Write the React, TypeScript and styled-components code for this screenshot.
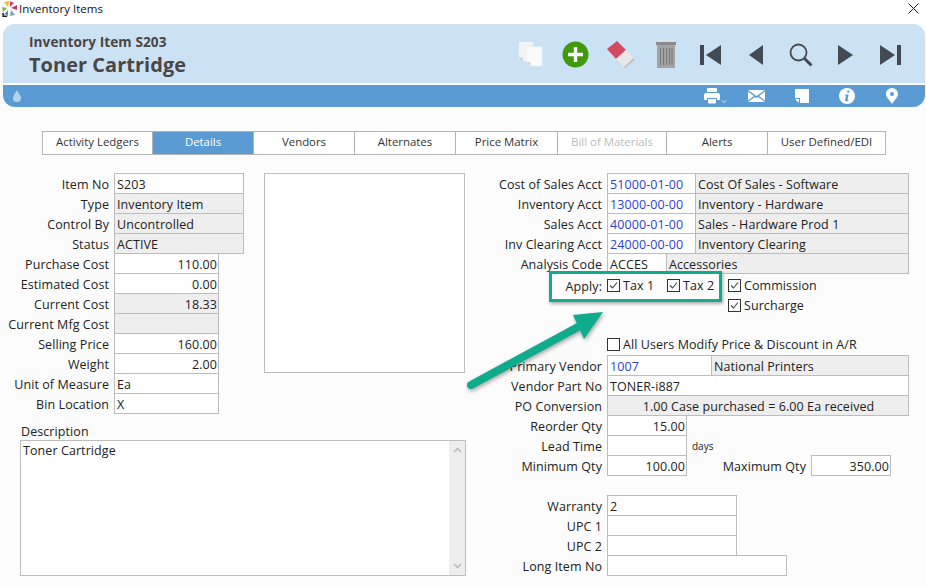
import React from "react";
import styled, { createGlobalStyle } from "styled-components";

const Global = createGlobalStyle`
  html, body { margin: 0; padding: 0; background: #fcfcfc; }
  body { font-family: "Open Sans", "Noto Sans", sans-serif; font-size: 12.5px; letter-spacing: 0.08px; color: #222; }
`;

const Page = styled.div`
  position: relative;
  width: 926px;
  height: 587px;
  overflow: hidden;
  background: #fcfcfc;
`;
const TitleBar = styled.div`
  height: 24px;
  background: #fff;
  display: flex;
  align-items: flex-start;
  justify-content: space-between;
  padding: 0 7px 0 2px;
  box-sizing: border-box;
`;
const TitleLeft = styled.div`
  display: flex;
  align-items: center;
  gap: 2px;
  height: 17px;
  font-size: 11.5px;
  letter-spacing: 0;
  color: #111;
`;
const Head = styled.div`
  margin: 0 1px 0 3px;
`;
const HeadTop = styled.div`
  height: 59px;
  background: #cbe1f4;
  border-radius: 12px 12px 0 0;
  display: flex;
  align-items: center;
  justify-content: space-between;
  padding: 0 12px 0 26px;
  box-sizing: border-box;
`;
const HeadTitles = styled.div`
  color: #4a4646;
  font-weight: 700;
  padding-top: 4px;
`;
const HeadSmall = styled.div`
  font-size: 13.6px;
  line-height: 18px;
  margin-top: 1px;
`;
const HeadBig = styled.div`
  font-size: 19.9px;
  line-height: 28px;
  font-weight: 700;
`;
const IconRow = styled.div<{ $top?: number }>`
  display: flex;
  align-items: center;
  padding-top: ${(p) => p.$top ?? 0}px;
`;
const Slot = styled.div`
  width: 45px;
  display: flex;
  align-items: center;
  justify-content: center;
`;
const HeadBar = styled.div`
  margin-top: 2px;
  height: 22px;
  background: #5b9bd3;
  border-radius: 0 0 12px 12px;
  display: flex;
  align-items: center;
  justify-content: space-between;
  padding: 0 11px 0 10px;
  box-sizing: border-box;
`;
const Tabs = styled.div`
  display: flex;
  margin: 24px 0 0 42px;
  height: 24px;
`;
const Tab = styled.div<{ $w: number; $on?: boolean; $off?: boolean }>`
  width: ${(p) => p.$w}px;
  box-sizing: border-box;
  margin-left: -1px;
  &:first-child { margin-left: 0; }
  border: 1px solid #b4b4b4;
  display: flex;
  align-items: center;
  justify-content: center;
  padding-bottom: 3px;
  font-size: 11.4px;
  letter-spacing: 0;
  background: ${(p) => (p.$on ? "#5b9bd3" : "#fff")};
  color: ${(p) => (p.$on ? "#fff" : p.$off ? "#bbb" : "#333")};
`;
const Form = styled.div`
  display: grid;
  grid-template-columns: 264px 202px 1fr;
  grid-template-rows: 251px auto;
  margin-top: 18px;
`;
const LeftCol = styled.div`
  grid-column: 1;
  grid-row: 1;
`;
const PhotoBox = styled.div`
  grid-column: 2;
  grid-row: 1;
  width: 201px;
  height: 200px;
  box-sizing: border-box;
  border: 1px solid #bdbdbd;
  background: #fff;
`;
const RightCol = styled.div`
  grid-column: 3;
  grid-row: 1 / span 2;
`;
const DescBlock = styled.div`
  grid-column: 1 / span 2;
  grid-row: 2;
  padding-left: 20px;
`;
const DescLabel = styled.div`
  height: 16px;
  line-height: 15px;
  padding-left: 1px;
`;
const DescBox = styled.div`
  width: 446px;
  height: 136px;
  box-sizing: border-box;
  border: 1px solid #bdbdbd;
  background: #fff;
  display: flex;
  justify-content: space-between;
`;
const DescText = styled.div`
  padding: 2px 2px;
  line-height: 16px;
`;
const Scroll = styled.div`
  width: 16px;
  background: #eee;
  display: flex;
  flex-direction: column;
  justify-content: space-between;
  align-items: center;
  padding: 6px 0;
  box-sizing: border-box;
`;
const Row = styled.div`
  display: flex;
  height: 20px;
`;
const Label = styled.div<{ $w: number }>`
  width: ${(p) => p.$w}px;
  flex: none;
  text-align: right;
  padding-right: 5px;
  box-sizing: border-box;
  line-height: 23px;
  white-space: nowrap;
  color: #222;
`;
const Field = styled.div<{ $w: number; $ro?: boolean; $right?: boolean; $link?: boolean; $center?: boolean }>`
  width: ${(p) => p.$w}px;
  height: 21px;
  flex: none;
  box-sizing: border-box;
  border: 1px solid #bdbdbd;
  margin-right: -1px;
  padding: 0 1px 0 2px;
  line-height: 21px;
  white-space: nowrap;
  overflow: hidden;
  background: ${(p) => (p.$ro ? "#eee" : "#fff")};
  text-align: ${(p) => (p.$right ? "right" : p.$center ? "center" : "left")};
  color: ${(p) => (p.$link ? "#2b3fd6" : "#222")};
`;
const Days = styled.div`
  font-size: 10px;
  letter-spacing: 0;
  line-height: 22px;
  margin-left: 6px;
`;
const ApplyRow = styled.div`
  display: flex;
  height: 20px;
  margin-top: 2px;
`;
const CheckItem = styled.div<{ $w: number }>`
  width: ${(p) => p.$w}px;
  display: flex;
  align-items: center;
  gap: 3px;
  white-space: nowrap;
`;
const Box = styled.div`
  width: 13px;
  height: 13px;
  flex: none;
  box-sizing: border-box;
  border: 1px solid #333;
  background: #fff;
  display: flex;
  align-items: center;
  justify-content: center;
`;
const Spacer = styled.div<{ $h: number }>`
  height: ${(p) => p.$h}px;
`;
const Highlight = styled.div`
  position: absolute;
  left: 549px;
  top: 271px;
  width: 173px;
  height: 31px;
  box-sizing: border-box;
  border: 3px solid #12ab8f;
  box-shadow: 1px 2px 3px rgba(0, 0, 0, 0.3);
`;
const ArrowSvg = styled.svg`
  position: absolute;
  left: 460px;
  top: 300px;
  filter: drop-shadow(1px 2px 2px rgba(0, 0, 0, 0.35));
`;
const CloseSvg = styled.svg`
  margin-top: 3px;
`;

const Check = ({ on = true }: { on?: boolean }) => (
  <Box>
    {on && (
      <svg width="11" height="11" viewBox="0 0 11 11">
        <path d="M2 5.5 L4.5 8 L9 2.5" fill="none" stroke="#444" strokeWidth="1.1" />
      </svg>
    )}
  </Box>
);

const Logo = () => (
  <svg width="15" height="16" viewBox="0 0 15 16">
    <path d="M6 6 L2 1 L7 0 Z" fill="#f5c21b" />
    <path d="M8 6 L8 0 L12 2 Z" fill="#d93a7d" />
    <path d="M9 7 L15 4 L15 9 Z" fill="#c9326f" />
    <path d="M9 9 L13 14 L8 15 Z" fill="#7f9fc2" />
    <path d="M6 9 L6 15 L3 13 Z" fill="#3f93c9" />
    <path d="M5 7 L0 6 L1 11 Z" fill="#7cb93e" />
    <path d="M0.5 16 V12 H1.8 V14.7 H5 V16 Z M2 14 L5 11" fill="#222" stroke="#222" strokeWidth=".3" />
  </svg>
);
const Close = () => (
  <CloseSvg width="11" height="11" viewBox="0 0 11 11">
    <path d="M0.5 0.5 L10.5 10.5 M10.5 0.5 L0.5 10.5" stroke="#222" strokeWidth="1" />
  </CloseSvg>
);
const CopyIcon = () => (
  <svg width="25" height="25" viewBox="0 0 26 26">
    <path d="M1 0 H16 V20 H5 L1 16 Z" fill="#f3f3f3" />
    <path d="M9 5 H25 V25 H13 L9 21 Z" fill="#fafafa" stroke="#e6eef5" strokeWidth=".5" />
    <path d="M9 21 H13 V25 Z" fill="#cfcfcf" />
    <path d="M1 16 H5 V20 Z" fill="#cfcfcf" />
  </svg>
);
const PlusIcon = () => (
  <svg width="27" height="27" viewBox="0 0 27 27">
    <circle cx="13.5" cy="13.5" r="13" fill="#3f9a0e" />
    <path d="M13.5 6 V21 M6 13.5 H21" stroke="#fff" strokeWidth="3.4" />
  </svg>
);
const EraserIcon = () => (
  <svg width="28" height="27" viewBox="0 0 28 27">
    <path d="M0 8 L10 0 L19 9 L9 18 Z" fill="#d24a62" />
    <path d="M9 18 L19 9 L27 17 L17 26 Z" fill="#e8e8e8" />
    <path d="M17 26 L27 17 L27.5 19 L18 27 Z" fill="#bdbdbd" />
  </svg>
);
const TrashIcon = () => (
  <svg width="20" height="26" viewBox="0 0 20 26">
    <path d="M0 0 H20 V3 H0 Z" fill="#8a8a8a" />
    <path d="M1 3 H19 V26 H1 Z" fill="#a3a3a3" />
    <path d="M4.5 6 V23 M7.5 6 V23 M10.5 6 V23 M13.5 6 V23 M16 6 V23" stroke="#777" strokeWidth="1" />
  </svg>
);
const Nav = ({ d, w }: { d: string; w: number }) => (
  <svg width={w} height="20" viewBox={`0 0 ${w} 20`}>
    <path d={d} fill="#434a54" />
  </svg>
);
const SearchIcon = () => (
  <svg width="24" height="24" viewBox="0 0 24 24">
    <circle cx="9.5" cy="9.5" r="8" fill="none" stroke="#434a54" strokeWidth="1.8" />
    <path d="M15.5 15.5 L22.5 22.5" stroke="#434a54" strokeWidth="3" />
  </svg>
);
const Drop = () => (
  <svg width="8" height="12" viewBox="0 0 8 12">
    <path d="M4 0 C5 3 8 5 8 8 A4 4 0 0 1 0 8 C0 5 3 3 4 0 Z" fill="#b5d2ec" />
  </svg>
);
const PrintIcon = () => (
  <svg width="30" height="16" viewBox="-7 0 30 16">
    <path d="M3 0 H12 A1 1 0 0 1 13 1 V4 H3 Z M2 5 H14 A2 2 0 0 1 16 7 V12 H13 V10 H3 V12 H0 V7 A2 2 0 0 1 2 5 Z M4 11 H12 V14.5 A1 1 0 0 1 11 15.5 H5 A1 1 0 0 1 4 14.5 Z" fill="#fff" />
    <path d="M18 12.5 L20 14.5 L22 12.5" fill="none" stroke="#fff" strokeWidth=".8" />
  </svg>
);
const MailIcon = () => (
  <svg width="17" height="12" viewBox="0 0 17 12">
    <path d="M0 0 H17 L8.5 6 Z M0 1.5 L6 6 L0 10.5 Z M17 1.5 L11 6 L17 10.5 Z M0 12 L7 7 L8.5 8 L10 7 L17 12 Z" fill="#fff" />
  </svg>
);
const NoteIcon = () => (
  <svg width="14" height="14" viewBox="0 0 14 14">
    <path d="M0 0 H14 V14 H5 V9 H0 Z" fill="#fff" />
    <path d="M0 10 H4 V14 Z" fill="#fff" />
  </svg>
);
const InfoIcon = () => (
  <svg width="16" height="16" viewBox="0 0 16 16">
    <circle cx="8" cy="8" r="8" fill="#fff" />
    <path d="M8.3 2.6 h2 v2 h-2 Z M6.2 6.4 h3.4 L8.4 11.8 h1 l-.2 1.1 H5.9 L7 7.5 H6 Z" fill="#5b9bd3" />
  </svg>
);
const PinIcon = () => (
  <svg width="12" height="16" viewBox="0 0 12 16">
    <path fillRule="evenodd" d="M6 0 A6 6 0 0 1 12 6 C12 9 8 13 6 16 C4 13 0 9 0 6 A6 6 0 0 1 6 0 Z M6 4 A2 2 0 1 0 6 8 A2 2 0 1 0 6 4 Z" fill="#fff" />
  </svg>
);
const Chevron = ({ up }: { up?: boolean }) => (
  <svg width="9" height="6" viewBox="0 0 9 6">
    <path d={up ? "M1 5 L4.5 1.5 L8 5" : "M1 1 L4.5 4.5 L8 1"} fill="none" stroke="#bbb" strokeWidth="1.6" />
  </svg>
);

const tabs: [string, number, boolean?, boolean?][] = [
  ["Activity Ledgers", 111],
  ["Details", 102, true],
  ["Vendors", 102],
  ["Alternates", 102],
  ["Price Matrix", 103],
  ["Bill of Materials", 110, false, true],
  ["Alerts", 102],
  ["User Defined/EDI", 119],
];

const L = 114;

export default function App() {
  return (
    <Page>
      <Global />
      <TitleBar>
        <TitleLeft>
          <Logo />
          Inventory Items
        </TitleLeft>
        <Close />
      </TitleBar>
      <Head>
        <HeadTop>
          <HeadTitles>
            <HeadSmall>Inventory Item S203</HeadSmall>
            <HeadBig>Toner Cartridge</HeadBig>
          </HeadTitles>
          <IconRow $top={2}>
            <Slot><CopyIcon /></Slot>
            <Slot><PlusIcon /></Slot>
            <Slot><EraserIcon /></Slot>
            <Slot><TrashIcon /></Slot>
            <Slot><Nav w={21} d="M0 0 H4 V20 H0 Z M21 0 V20 L6 10 Z" /></Slot>
            <Slot><Nav w={14} d="M14 0 V20 L0 10 Z" /></Slot>
            <Slot><SearchIcon /></Slot>
            <Slot><Nav w={15} d="M0 0 V20 L15 10 Z" /></Slot>
            <Slot><Nav w={21} d="M0 0 V20 L15 10 Z M17 0 H21 V20 H17 Z" /></Slot>
          </IconRow>
        </HeadTop>
        <HeadBar>
          <Drop />
          <IconRow>
            <Slot><PrintIcon /></Slot>
            <Slot><MailIcon /></Slot>
            <Slot><NoteIcon /></Slot>
            <Slot><InfoIcon /></Slot>
            <Slot><PinIcon /></Slot>
          </IconRow>
        </HeadBar>
      </Head>
      <Tabs>
        {tabs.map(([t, w, on, off]) => (
          <Tab key={t} $w={w} $on={on} $off={off}>{t}</Tab>
        ))}
      </Tabs>
      <Form>
        <LeftCol>
          <Row><Label $w={L}>Item No</Label><Field $w={130}>S203</Field></Row>
          <Row><Label $w={L}>Type</Label><Field $w={130} $ro>Inventory Item</Field></Row>
          <Row><Label $w={L}>Control By</Label><Field $w={130} $ro>Uncontrolled</Field></Row>
          <Row><Label $w={L}>Status</Label><Field $w={130} $ro>ACTIVE</Field></Row>
          <Row><Label $w={L}>Purchase Cost</Label><Field $w={105} $right>110.00</Field></Row>
          <Row><Label $w={L}>Estimated Cost</Label><Field $w={105} $right>0.00</Field></Row>
          <Row><Label $w={L}>Current Cost</Label><Field $w={105} $right $ro>18.33</Field></Row>
          <Row><Label $w={L}>Current Mfg Cost</Label><Field $w={105} $right $ro /></Row>
          <Row><Label $w={L}>Selling Price</Label><Field $w={105} $right>160.00</Field></Row>
          <Row><Label $w={L}>Weight</Label><Field $w={105} $right>2.00</Field></Row>
          <Row><Label $w={L}>Unit of Measure</Label><Field $w={105}>Ea</Field></Row>
          <Row><Label $w={L}>Bin Location</Label><Field $w={105}>X</Field></Row>
        </LeftCol>
        <PhotoBox />
        <RightCol>
          <Row><Label $w={141}>Cost of Sales Acct</Label><Field $w={89} $link>51000-01-00</Field><Field $w={214} $ro>Cost Of Sales - Software</Field></Row>
          <Row><Label $w={141}>Inventory Acct</Label><Field $w={89} $link>13000-00-00</Field><Field $w={214} $ro>Inventory - Hardware</Field></Row>
          <Row><Label $w={141}>Sales Acct</Label><Field $w={89} $link>40000-01-00</Field><Field $w={214} $ro>Sales - Hardware Prod 1</Field></Row>
          <Row><Label $w={141}>Inv Clearing Acct</Label><Field $w={89} $link>24000-00-00</Field><Field $w={214} $ro>Inventory Clearing</Field></Row>
          <Row><Label $w={141}>Analysis Code</Label><Field $w={60}>ACCES</Field><Field $w={243} $ro>Accessories</Field></Row>
          <ApplyRow>
            <Label $w={141}>Apply:</Label>
            <CheckItem $w={60}><Check />Tax 1</CheckItem>
            <CheckItem $w={61}><Check />Tax 2</CheckItem>
            <CheckItem $w={100}><Check />Commission</CheckItem>
          </ApplyRow>
          <Row>
            <Label $w={262} />
            <CheckItem $w={100}><Check />Surcharge</CheckItem>
          </Row>
          <Spacer $h={19} />
          <Row>
            <Label $w={141} />
            <CheckItem $w={280}><Check on={false} />All Users Modify Price &amp; Discount in A/R</CheckItem>
          </Row>
          <Spacer $h={1} />
          <Row><Label $w={141}>Primary Vendor</Label><Field $w={105} $link>1007</Field><Field $w={198} $ro>National Printers</Field></Row>
          <Row><Label $w={141}>Vendor Part No</Label><Field $w={302}>TONER-i887</Field></Row>
          <Row><Label $w={141}>PO Conversion</Label><Field $w={302} $ro $center>1.00 Case purchased = 6.00 Ea received</Field></Row>
          <Row><Label $w={141}>Reorder Qty</Label><Field $w={80} $right>15.00</Field></Row>
          <Row><Label $w={141}>Lead Time</Label><Field $w={80} $right /><Days>days</Days></Row>
          <Row>
            <Label $w={141}>Minimum Qty</Label>
            <Field $w={80} $right>100.00</Field>
            <Label $w={125}>Maximum Qty</Label>
            <Field $w={80} $right>350.00</Field>
          </Row>
          <Spacer $h={20} />
          <Row><Label $w={141}>Warranty</Label><Field $w={130}>2</Field></Row>
          <Row><Label $w={141}>UPC 1</Label><Field $w={130} /></Row>
          <Row><Label $w={141}>UPC 2</Label><Field $w={130} /></Row>
          <Row><Label $w={141}>Long Item No</Label><Field $w={180} /></Row>
        </RightCol>
        <DescBlock>
          <DescLabel>Description</DescLabel>
          <DescBox>
            <DescText>Toner Cartridge</DescText>
            <Scroll><Chevron up /><Chevron /></Scroll>
          </DescBox>
        </DescBlock>
      </Form>
      <Highlight />
      <ArrowSvg width="160" height="100" viewBox="0 0 160 100">
        <path d="M11 85 L118 27" stroke="#0fab8d" strokeWidth="8" strokeLinecap="round" />
        <path d="M143 12 L113 15 L124 39 Z" fill="#0fab8d" />
      </ArrowSvg>
    </Page>
  );
}
